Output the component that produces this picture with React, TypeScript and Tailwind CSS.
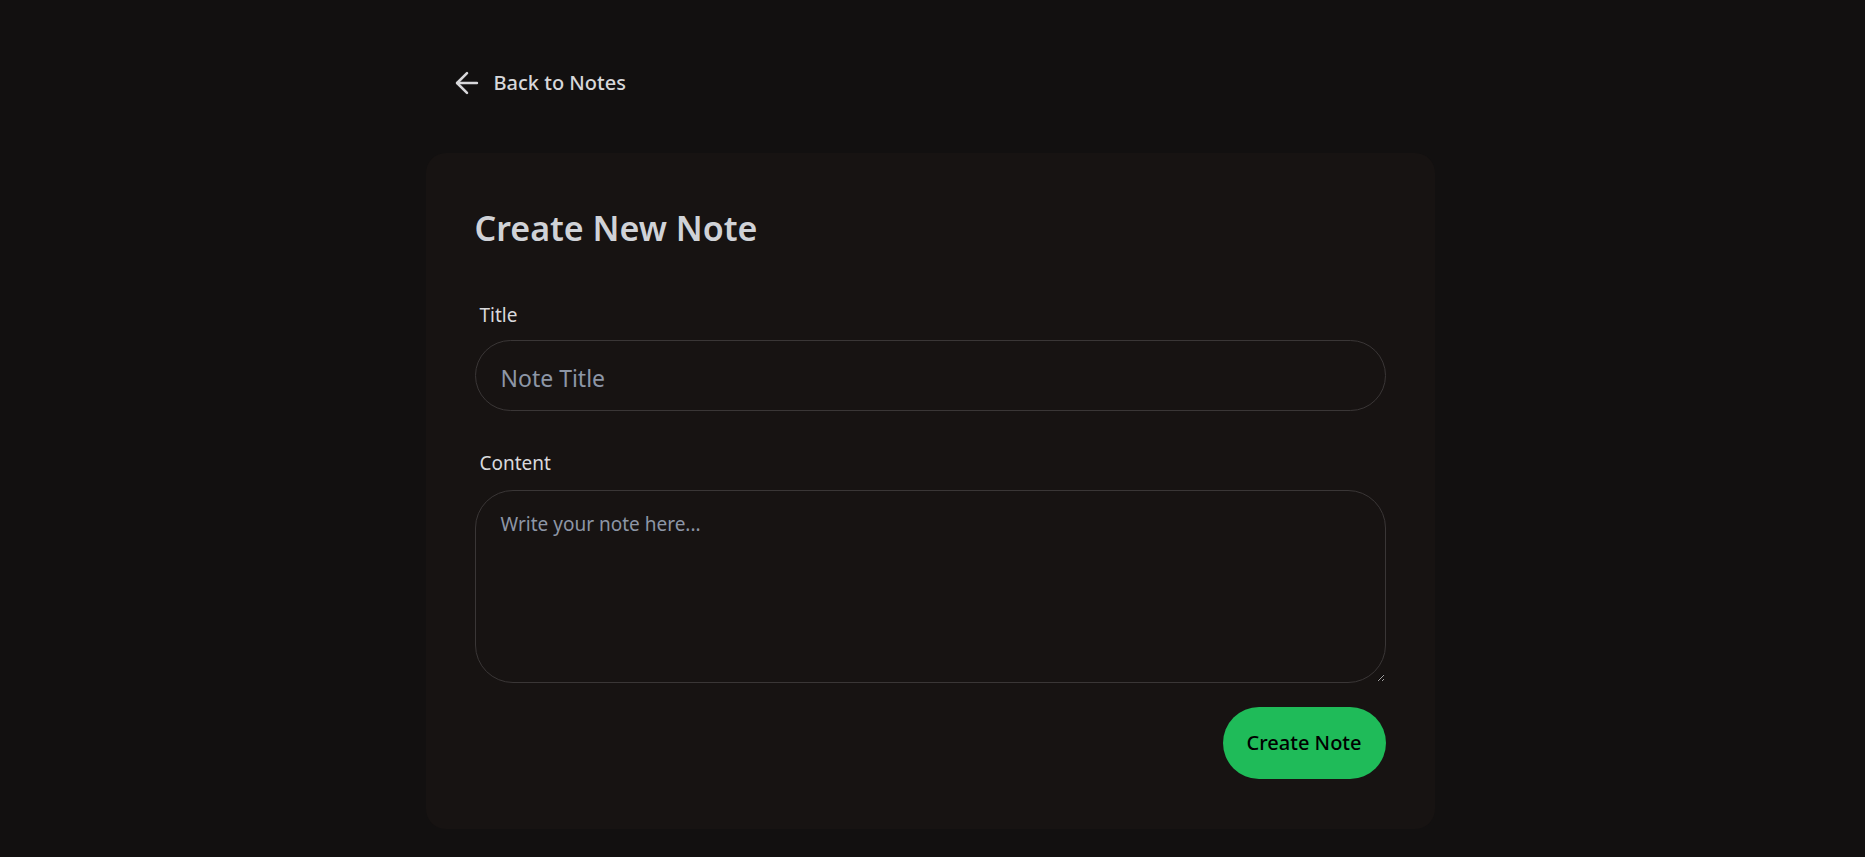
import React, { useState } from "react";
import { ArrowLeft } from "lucide-react";

const App: React.FC = () => {
  const [title, setTitle] = useState("");
  const [content, setContent] = useState("");

  const onSubmit = (e: React.FormEvent) => {
    e.preventDefault();
  };

  return (
    <div className="min-h-screen bg-[#121010] pr-[5px] font-['Noto_Sans',sans-serif]">
      <div className="mx-auto w-[1009px] pt-[66px] pb-[32px]">
        <button
          type="button"
          className="ml-[24px] flex items-center gap-[10px] text-[20px] leading-[28px] font-medium text-[#d7d7da]"
        >
          <ArrowLeft size={34} strokeWidth={1.8} className="text-[#d7d7da]" />
          Back to Notes
        </button>

        <div className="mt-[53px] rounded-[20px] bg-[#171312] px-[49px] pt-[53px] pb-[50px]">
          <h1 className="text-[34px] leading-[45px] font-semibold text-[#d0d2d7] mb-[50px]">
            Create New Note
          </h1>

          <form onSubmit={onSubmit} className="flex flex-col">
            <label className="ml-[5px] text-[19px] leading-[28px] text-[#d9d9dc] mb-[11px]">
              Title
            </label>
            <input
              type="text"
              placeholder="Note Title"
              value={title}
              onChange={(e) => setTitle(e.target.value)}
              className="h-[71px] rounded-full border border-[#3a3636] bg-transparent px-[25px] pt-[4px] text-[23px] text-[#e5e5e5] placeholder:text-[#8d96a6] outline-none focus:border-[#5a5555]"
            />

            <label className="ml-[5px] mt-[38px] text-[19px] leading-[28px] text-[#d9d9dc] mb-[13px]">
              Content
            </label>
            <textarea
              placeholder="Write your note here..."
              value={content}
              onChange={(e) => setContent(e.target.value)}
              className="h-[193px] rounded-[38px] border border-[#3a3636] bg-transparent px-[25px] pt-[19px] pb-[16px] text-[19px] leading-[28px] text-[#e5e5e5] placeholder:text-[#8d96a6] outline-none focus:border-[#5a5555]"
            />

            <div className="flex justify-end mt-[24px]">
              <button
                type="submit"
                className="h-[72px] rounded-full bg-[#1fbb59] px-[24px] text-[20px] font-medium text-black hover:bg-[#1aa94f]"
              >
                Create Note
              </button>
            </div>
          </form>
        </div>
      </div>
    </div>
  );
};

export default App;
